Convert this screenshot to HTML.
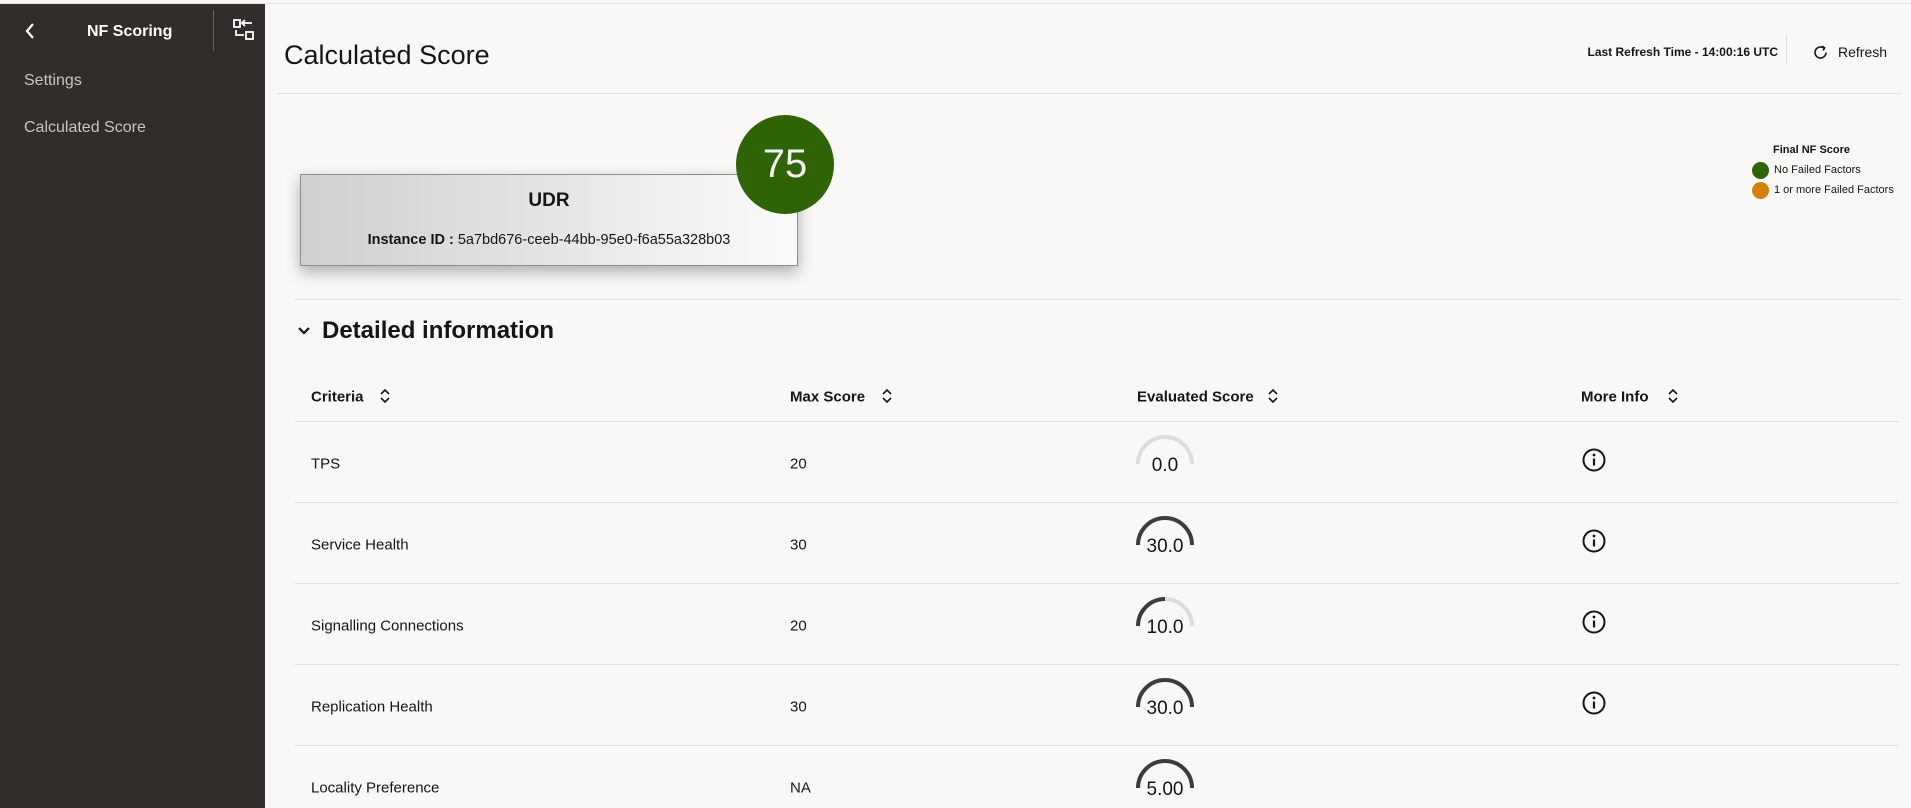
<!DOCTYPE html>
<html><head><meta charset="utf-8"><style>
*{margin:0;padding:0;box-sizing:border-box}
body{width:1911px;height:808px;overflow:hidden;background:#f9f8f6;font-family:"Liberation Sans",sans-serif;color:#161513;position:relative}
.a{position:absolute;white-space:nowrap}
.side{left:0;top:4px;width:265px;height:804px;background:#312d2a}
.topline{left:0;top:0;width:1911px;height:4px;background:#f9f8f6;border-bottom:1px solid #e4e2df}
.hl{height:1px;background:#e2e0dc}
.cell{font-size:15px;transform:translateY(-50%)}
.hd{font-size:15px;font-weight:bold;transform:translateY(-50%)}
.gt{font-size:19px;transform:translate(-50%,-50%)}
</style></head><body>
<div class="a topline"></div>
<div class="a side"></div>
<svg class="a" style="left:24px;top:22px" width="12" height="18" viewBox="0 0 12 18"><path d="M9 2 L3 9 L9 16" stroke="#fff" stroke-width="2.2" fill="none"/></svg>
<div class="a" style="left:87px;top:23px;font-size:16px;font-weight:bold;color:#fff">NF Scoring</div>
<div class="a" style="left:213px;top:10px;width:1px;height:41px;background:#6b6560"></div>
<svg class="a" style="left:232px;top:18px" width="24" height="24" viewBox="0 0 24 24" fill="none" stroke="#fff" stroke-width="1.8"><rect x="2" y="2" width="6" height="7"/><path d="M11 5h9M13 2l-3 3 3 3"/><rect x="14" y="14" width="7" height="7"/><path d="M4 12v5h8"/></svg>
<div class="a" style="left:24px;top:72px;font-size:16px;color:#c9c5c1">Settings</div>
<div class="a" style="left:24px;top:119px;font-size:16px;color:#c9c5c1">Calculated Score</div>

<div class="a" style="left:284px;top:40px;font-size:27px">Calculated Score</div>
<div class="a" style="right:133px;top:45px;font-size:12px;font-weight:bold">Last Refresh Time - 14:00:16 UTC</div>
<div class="a" style="left:1786px;top:34px;width:1px;height:29px;background:#ddd"></div>
<svg class="a" style="left:1812px;top:44px" width="17" height="17" viewBox="0 0 17 17" fill="none" stroke="#161513" stroke-width="1.6"><path d="M14 8.5A5.5 5.5 0 1 1 11.5 3.9"/><path d="M10 2.2l2.6 1.6-1.4 2.7"/></svg>
<div class="a" style="left:1838px;top:44px;font-size:14px">Refresh</div>
<div class="a hl" style="left:277px;top:93px;width:1624px"></div>

<div class="a" style="left:300px;top:174px;width:498px;height:92px;border:1px solid #8d8d8d;background:linear-gradient(90deg,#cfcfcf,#fbfbfb);box-shadow:0 6px 14px rgba(0,0,0,.3)"></div>
<div class="a" style="left:300px;top:190px;width:498px;text-align:center;font-size:19px;font-weight:bold">UDR</div>
<div class="a" style="left:300px;top:232px;width:498px;text-align:center;font-size:14.5px"><b>Instance ID :</b> 5a7bd676-ceeb-44bb-95e0-f6a55a328b03</div>
<div class="a" style="left:736px;top:115px;width:98px;height:99px;border-radius:50%;background:#2f6406;color:#f2f2f2;font-size:40px;text-align:center;line-height:99px">75</div>

<div class="a" style="left:1773px;top:144px;font-size:11px;font-weight:bold">Final NF Score</div>
<div class="a" style="left:1752px;top:162px;width:17px;height:17px;border-radius:50%;background:#2f6406"></div>
<div class="a" style="left:1774px;top:164px;font-size:11px">No Failed Factors</div>
<div class="a" style="left:1752px;top:182px;width:17px;height:17px;border-radius:50%;background:#d2800a"></div>
<div class="a" style="left:1774px;top:184px;font-size:11px">1 or more Failed Factors</div>

<div class="a hl" style="left:295px;top:299px;width:1606px"></div>
<svg class="a" style="left:297px;top:326px" width="14" height="10" viewBox="0 0 14 10"><path d="M2 2l5 5 5-5" stroke="#161513" stroke-width="2.2" fill="none"/></svg>
<div class="a" style="left:322px;top:317px;font-size:24px;font-weight:bold">Detailed information</div>

<div class="a hd" style="left:311px;top:397px">Criteria</div>
<div class="a hd" style="left:790px;top:397px">Max Score</div>
<div class="a hd" style="left:1137px;top:397px">Evaluated Score</div>
<div class="a hd" style="left:1581px;top:397px">More Info</div>
<svg width="0" height="0" style="position:absolute"><defs><symbol id="srt" viewBox="0 0 12 16"><path d="M2 6l4-4 4 4M2 10l4 4 4-4" stroke="#161513" stroke-width="1.6" fill="none"/></symbol><symbol id="inf" viewBox="0 0 24 24"><circle cx="12" cy="12" r="10.5" stroke="#161513" stroke-width="2" fill="none"/><path d="M12 10.5v7" stroke="#161513" stroke-width="2.2"/><circle cx="12" cy="7" r="1.4" fill="#161513"/></symbol></defs></svg>
<svg class="a" style="left:379px;top:388px" width="12" height="16"><use href="#srt"/></svg>
<svg class="a" style="left:881px;top:388px" width="12" height="16"><use href="#srt"/></svg>
<svg class="a" style="left:1267px;top:388px" width="12" height="16"><use href="#srt"/></svg>
<svg class="a" style="left:1667px;top:388px" width="12" height="16"><use href="#srt"/></svg>
<div class="a hl" style="left:295px;top:421px;width:1604px"></div>

<div class="a cell" style="left:311px;top:464px">TPS</div>
<div class="a cell" style="left:790px;top:464px">20</div>
<svg class="a" style="left:1135px;top:432px" width="60" height="34" viewBox="0 0 60 34" fill="none" stroke-width="4"><path d="M3 32A27 27 0 0 1 57 32" stroke="#dcdcdc"/></svg>
<div class="a gt" style="left:1165px;top:466px">0.0</div>
<svg class="a" style="left:1582px;top:448px" width="24" height="24"><use href="#inf"/></svg>
<div class="a hl" style="left:295px;top:502px;width:1604px"></div>

<div class="a cell" style="left:311px;top:545px">Service Health</div>
<div class="a cell" style="left:790px;top:545px">30</div>
<svg class="a" style="left:1135px;top:513px" width="60" height="34" viewBox="0 0 60 34" fill="none" stroke-width="4"><path d="M3 32A27 27 0 0 1 57 32" stroke="#3c3c3c"/></svg>
<div class="a gt" style="left:1165px;top:547px">30.0</div>
<svg class="a" style="left:1582px;top:529px" width="24" height="24"><use href="#inf"/></svg>
<div class="a hl" style="left:295px;top:583px;width:1604px"></div>

<div class="a cell" style="left:311px;top:626px">Signalling Connections</div>
<div class="a cell" style="left:790px;top:626px">20</div>
<svg class="a" style="left:1135px;top:594px" width="60" height="34" viewBox="0 0 60 34" fill="none" stroke-width="4"><path d="M3 32A27 27 0 0 1 57 32" stroke="#dcdcdc"/><path d="M3 32A27 27 0 0 1 30 5" stroke="#3c3c3c"/></svg>
<div class="a gt" style="left:1165px;top:628px">10.0</div>
<svg class="a" style="left:1582px;top:610px" width="24" height="24"><use href="#inf"/></svg>
<div class="a hl" style="left:295px;top:664px;width:1604px"></div>

<div class="a cell" style="left:311px;top:707px">Replication Health</div>
<div class="a cell" style="left:790px;top:707px">30</div>
<svg class="a" style="left:1135px;top:675px" width="60" height="34" viewBox="0 0 60 34" fill="none" stroke-width="4"><path d="M3 32A27 27 0 0 1 57 32" stroke="#3c3c3c"/></svg>
<div class="a gt" style="left:1165px;top:709px">30.0</div>
<svg class="a" style="left:1582px;top:691px" width="24" height="24"><use href="#inf"/></svg>
<div class="a hl" style="left:295px;top:745px;width:1604px"></div>

<div class="a cell" style="left:311px;top:788px">Locality Preference</div>
<div class="a cell" style="left:790px;top:788px">NA</div>
<svg class="a" style="left:1135px;top:756px" width="60" height="34" viewBox="0 0 60 34" fill="none" stroke-width="4"><path d="M3 32A27 27 0 0 1 57 32" stroke="#3c3c3c"/></svg>
<div class="a gt" style="left:1165px;top:790px">5.00</div>
</body></html>
